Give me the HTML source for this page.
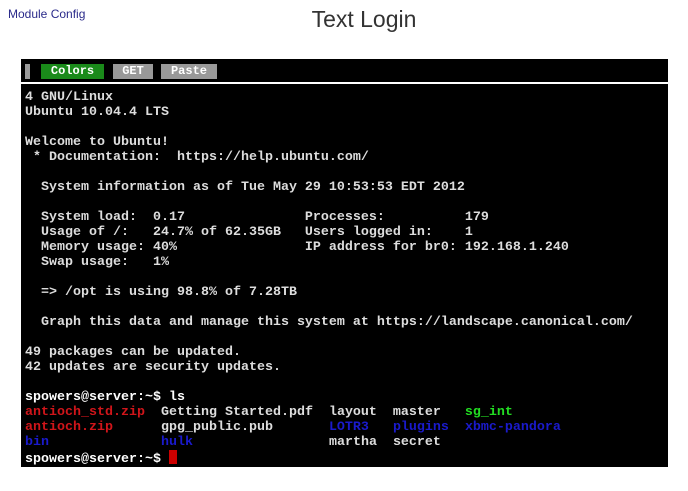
<!DOCTYPE html>
<html><head><meta charset="utf-8"><style>
body{margin:0;width:688px;height:491px;background:#fff;position:relative;overflow:hidden;font-family:"Liberation Sans",sans-serif}
.mc{position:absolute;left:8px;top:7px;font-size:12px;color:#2a2a8a}
.tl{position:absolute;left:0;width:728px;top:6px;text-align:center;font-size:23px;color:#333}
.term{position:absolute;left:21px;top:59px;width:647px;height:408px;background:#000}
.bar{position:absolute;left:0;top:0;width:647px;height:23px;border-bottom:2px solid #fff}
.b{position:absolute;top:5px;height:15px;font:bold 12px/15px "Liberation Mono",monospace;color:#fff;text-align:center}
pre{position:absolute;left:4px;top:31px;margin:0;font:bold 13.33px/15px "Liberation Mono",monospace;color:#ddd}
.r{color:#d0151a}.g{color:#22dd22}.bl{color:#1a1acc}.w{color:#fff}
.cur{display:inline-block;width:8px;height:14px;background:#c00;vertical-align:-2px}
</style></head><body>
<div class="mc">Module Config</div>
<div class="tl">Text Login</div>
<div class="term">
<div class="bar">
<div class="b" style="left:4px;width:5px;background:#999"></div>
<div class="b" style="left:20px;width:63px;background:#1a8a1a">Colors</div>
<div class="b" style="left:92px;width:40px;background:#999">GET</div>
<div class="b" style="left:140px;width:56px;background:#999">Paste</div>
</div>
<pre>4 GNU/Linux
Ubuntu 10.04.4 LTS

Welcome to Ubuntu!
 * Documentation:  https://help.ubuntu.com/

  System information as of Tue May 29 10:53:53 EDT 2012

  System load:  0.17               Processes:          179
  Usage of /:   24.7% of 62.35GB   Users logged in:    1
  Memory usage: 40%                IP address for br0: 192.168.1.240
  Swap usage:   1%

  =&gt; /opt is using 98.8% of 7.28TB

  Graph this data and manage this system at https://landscape.canonical.com/

49 packages can be updated.
42 updates are security updates.

<span class="w">spowers@server:~$ ls</span>
<span class="r">antioch_std.zip</span>  Getting Started.pdf  layout  master   <span class="g">sg_int</span>
<span class="r">antioch.zip</span>      gpg_public.pub       <span class="bl">LOTR3</span>   <span class="bl">plugins</span>  <span class="bl">xbmc-pandora</span>
<span class="bl">bin</span>              <span class="bl">hulk</span>                 martha  secret
<span class="w">spowers@server:~$ </span><span class="cur"></span></pre>
</div>
</body></html>
